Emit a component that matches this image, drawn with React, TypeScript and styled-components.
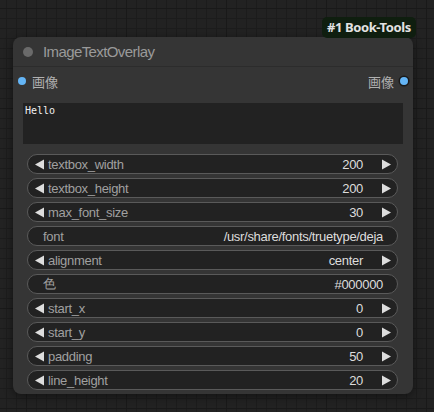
import React from 'react';
import styled, { createGlobalStyle } from 'styled-components';

const GlobalStyle = createGlobalStyle`
  html, body {
    margin: 0;
    padding: 0;
    background: #202020;
  }
`;

const Canvas = styled.div`
  position: relative;
  width: 434px;
  height: 412px;
  overflow: hidden;
  padding: 37px 0 0 13px;
  box-sizing: border-box;
  background-color: #222222;
  background-image:
    linear-gradient(to right, #191919 1px, transparent 1px),
    linear-gradient(to bottom, #191919 1px, transparent 1px),
    linear-gradient(to right, #1c1c1c 1px, transparent 1px),
    linear-gradient(to bottom, #1c1c1c 1px, transparent 1px);
  background-size: 100px 100px, 100px 100px, 10px 10px, 10px 10px;
  background-position: 26px 0, 0 8px, 6px 0, 0 8px;
  font-family: 'Liberation Sans', Arial, sans-serif;
`;

const Badge = styled.div`
  position: absolute;
  left: 322px;
  top: 17px;
  height: 21px;
  padding: 0 5px;
  border-radius: 5px;
  background: #0f1e0f;
  color: #e2e2e2;
  font-family: 'Noto Sans', sans-serif;
  font-weight: 700;
  font-size: 13px;
  line-height: 21px;
  letter-spacing: -0.4px;
`;

const Node = styled.div`
  width: 400px;
  padding-bottom: 4px;
  background: #353535;
  border-radius: 8px;
  box-shadow: 0 2px 10px rgba(0, 0, 0, 0.45);
`;

const Title = styled.div`
  display: flex;
  align-items: center;
  height: 29px;
  padding-left: 10px;
  gap: 10px;
  border-bottom: 1px solid #2c2c2c;
  color: #9a9a9a;
  font-size: 15px;
  letter-spacing: -0.6px;
`;

const Dot = styled.span`
  width: 10px;
  height: 10px;
  border-radius: 50%;
  background: #6a6a6a;
`;

const SlotRow = styled.div`
  display: flex;
  justify-content: space-between;
  align-items: center;
  height: 20px;
  margin-top: 4px;
  padding: 0 5px 0 5px;
`;

const Slot = styled.div<{ $right?: boolean }>`
  display: flex;
  align-items: center;
  gap: 6px;
  flex-direction: ${(p) => (p.$right ? 'row-reverse' : 'row')};
  color: #b0b0b0;
  font-family: 'Noto Sans CJK JP', sans-serif;
  font-size: 13px;
`;

const SlotDot = styled.span<{ $ring?: boolean }>`
  width: 8px;
  height: 8px;
  border-radius: 50%;
  background: #64b5f6;
  box-shadow: ${(p) => (p.$ring ? '0 0 0 1.5px #1a1a1a' : 'none')};
`;

const TextArea = styled.div`
  margin: 12px 10px 0 10px;
  height: 41px;
  padding: 2px 2px;
  box-sizing: border-box;
  background: #222222;
  color: #f0f0f0;
  font-family: 'DejaVu Sans Mono', monospace;
  font-size: 10px;
  line-height: 12px;
`;

const Widgets = styled.div`
  display: flex;
  flex-direction: column;
  gap: 4px;
  margin: 10px 15px 0 14px;
`;

const Widget = styled.div<{ $arrows: boolean }>`
  display: flex;
  align-items: center;
  height: 20px;
  box-sizing: border-box;
  border: 1px solid #5a5a5a;
  border-radius: 10px;
  background: #222222;
  padding: ${(p) => (p.$arrows ? '0 6px 0 7px' : '0 14px 0 15px')};
  font-size: 13px;
  letter-spacing: -0.3px;
`;

const Label = styled.span<{ $arrows: boolean }>`
  flex: 1;
  color: #a0a0a0;
  margin-left: ${(p) => (p.$arrows ? '4px' : '0')};
`;

const Value = styled.span<{ $arrows: boolean }>`
  color: #dddddd;
  margin-right: ${(p) => (p.$arrows ? '19px' : '0')};
`;

const Arrow = styled.svg`
  width: 9px;
  height: 11px;
  fill: #dddddd;
  flex-shrink: 0;
`;

type Item = { label: string; value: string; arrows: boolean };

const items: Item[] = [
  { label: 'textbox_width', value: '200', arrows: true },
  { label: 'textbox_height', value: '200', arrows: true },
  { label: 'max_font_size', value: '30', arrows: true },
  { label: 'font', value: '/usr/share/fonts/truetype/deja', arrows: false },
  { label: 'alignment', value: 'center', arrows: true },
  { label: '色', value: '#000000', arrows: false },
  { label: 'start_x', value: '0', arrows: true },
  { label: 'start_y', value: '0', arrows: true },
  { label: 'padding', value: '50', arrows: true },
  { label: 'line_height', value: '20', arrows: true },
];

const LeftArrow = () => (
  <Arrow viewBox="0 0 9 11">
    <polygon points="0,5.5 9,0.5 9,10.5" />
  </Arrow>
);

const RightArrow = () => (
  <Arrow viewBox="0 0 9 11">
    <polygon points="9,5.5 0,0.5 0,10.5" />
  </Arrow>
);

const App = () => {
  return (
    <Canvas>
      <GlobalStyle />
      <Badge>#1 Book-Tools</Badge>
      <Node>
        <Title>
          <Dot />
          ImageTextOverlay
        </Title>
        <SlotRow>
          <Slot>
            <SlotDot />
            画像
          </Slot>
          <Slot $right>
            <SlotDot $ring />
            画像
          </Slot>
        </SlotRow>
        <TextArea>Hello</TextArea>
        <Widgets>
          {items.map((it) => (
            <Widget key={it.label} $arrows={it.arrows}>
              {it.arrows && <LeftArrow />}
              <Label $arrows={it.arrows}>{it.label}</Label>
              <Value $arrows={it.arrows}>{it.value}</Value>
              {it.arrows && <RightArrow />}
            </Widget>
          ))}
        </Widgets>
      </Node>
    </Canvas>
  );
};

export default App;
